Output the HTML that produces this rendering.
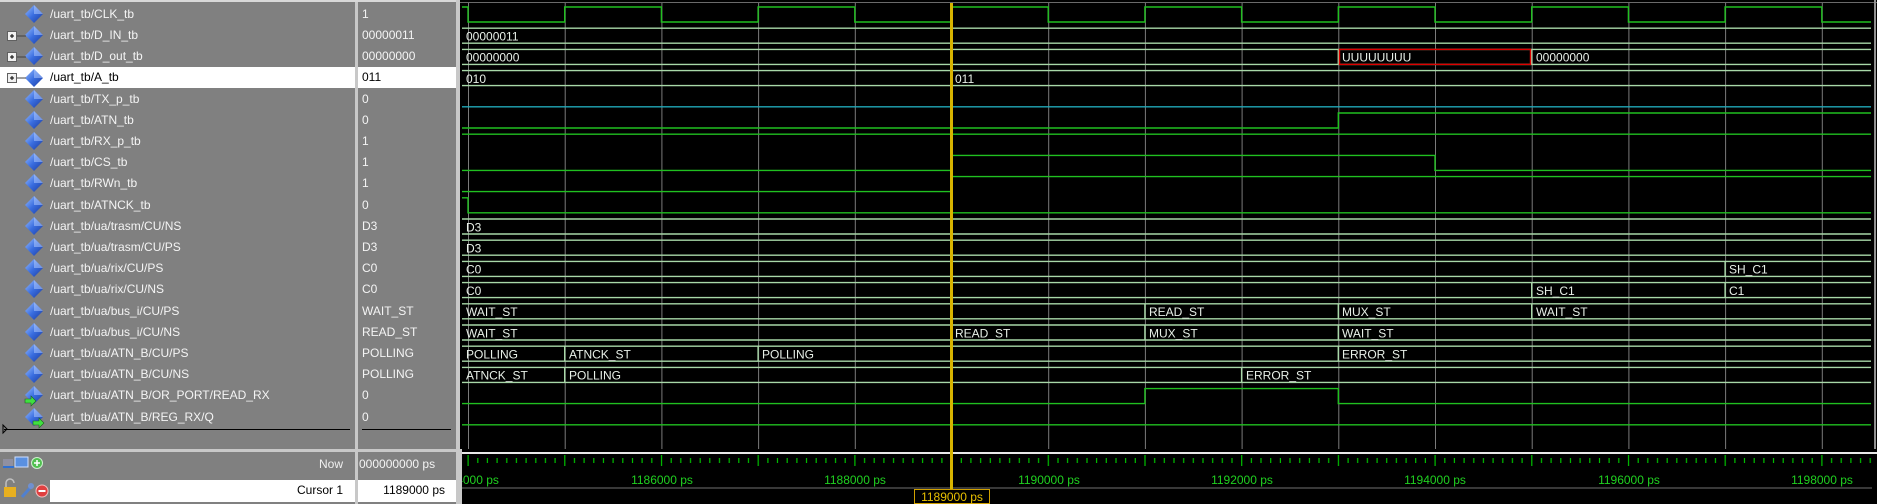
<!DOCTYPE html>
<html><head><meta charset="utf-8"><style>
html,body{margin:0;padding:0;background:#000;}
body{width:1877px;height:504px;position:relative;overflow:hidden;font-family:"Liberation Sans",sans-serif;font-size:12px;}
.p{position:absolute;background:#808080;}
.t{position:absolute;color:#f4f4f4;white-space:nowrap;line-height:21px;}
</style></head><body>
<div class="p" style="left:0;top:0;width:355px;height:449px;"></div>
<div style="position:absolute;left:355px;top:0;width:3px;height:504px;background:#c8c8c8"></div>
<div class="p" style="left:358px;top:0;width:98px;height:449px;"></div>
<div style="position:absolute;left:456px;top:0;width:4px;height:504px;background:#c8c8c8"></div>
<div style="position:absolute;left:0;top:0;width:456px;height:2px;background:#d8d8d8"></div>
<div style="position:absolute;left:0;top:449px;width:460px;height:3px;background:#c8c8c8"></div>
<div class="p" style="left:0;top:452px;width:355px;height:52px;"></div>
<div class="p" style="left:358px;top:452px;width:98px;height:52px;"></div>
<div style="position:absolute;left:0;top:67px;width:355px;height:21px;background:#fff"></div>
<div style="position:absolute;left:358px;top:67px;width:98px;height:21px;background:#fff"></div>
<div style="position:absolute;left:50px;top:480px;width:305px;height:22px;background:#fff"></div>
<div style="position:absolute;left:358px;top:480px;width:98px;height:22px;background:#fff"></div>
<div style="position:absolute;left:4px;top:429px;width:346px;height:1px;background:#000"></div>
<div style="position:absolute;left:362px;top:429px;width:89px;height:1px;background:#000"></div>

<div class="t" style="left:50px;top:4px">/uart_tb/CLK_tb</div>
<div class="t" style="left:50px;top:25px">/uart_tb/D_IN_tb</div>
<div class="t" style="left:50px;top:46px">/uart_tb/D_out_tb</div>
<div class="t" style="left:50px;top:67px;color:#000">/uart_tb/A_tb</div>
<div class="t" style="left:50px;top:89px">/uart_tb/TX_p_tb</div>
<div class="t" style="left:50px;top:110px">/uart_tb/ATN_tb</div>
<div class="t" style="left:50px;top:131px">/uart_tb/RX_p_tb</div>
<div class="t" style="left:50px;top:152px">/uart_tb/CS_tb</div>
<div class="t" style="left:50px;top:173px">/uart_tb/RWn_tb</div>
<div class="t" style="left:50px;top:195px">/uart_tb/ATNCK_tb</div>
<div class="t" style="left:50px;top:216px">/uart_tb/ua/trasm/CU/NS</div>
<div class="t" style="left:50px;top:237px">/uart_tb/ua/trasm/CU/PS</div>
<div class="t" style="left:50px;top:258px">/uart_tb/ua/rix/CU/PS</div>
<div class="t" style="left:50px;top:279px">/uart_tb/ua/rix/CU/NS</div>
<div class="t" style="left:50px;top:301px">/uart_tb/ua/bus_i/CU/PS</div>
<div class="t" style="left:50px;top:322px">/uart_tb/ua/bus_i/CU/NS</div>
<div class="t" style="left:50px;top:343px">/uart_tb/ua/ATN_B/CU/PS</div>
<div class="t" style="left:50px;top:364px">/uart_tb/ua/ATN_B/CU/NS</div>
<div class="t" style="left:50px;top:385px">/uart_tb/ua/ATN_B/OR_PORT/READ_RX</div>
<div class="t" style="left:50px;top:407px">/uart_tb/ua/ATN_B/REG_RX/Q</div>

<div class="t" style="left:362px;top:4px">1</div>
<div class="t" style="left:362px;top:25px">00000011</div>
<div class="t" style="left:362px;top:46px">00000000</div>
<div class="t" style="left:362px;top:67px;color:#000">011</div>
<div class="t" style="left:362px;top:89px">0</div>
<div class="t" style="left:362px;top:110px">0</div>
<div class="t" style="left:362px;top:131px">1</div>
<div class="t" style="left:362px;top:152px">1</div>
<div class="t" style="left:362px;top:173px">1</div>
<div class="t" style="left:362px;top:195px">0</div>
<div class="t" style="left:362px;top:216px">D3</div>
<div class="t" style="left:362px;top:237px">D3</div>
<div class="t" style="left:362px;top:258px">C0</div>
<div class="t" style="left:362px;top:279px">C0</div>
<div class="t" style="left:362px;top:301px">WAIT_ST</div>
<div class="t" style="left:362px;top:322px">READ_ST</div>
<div class="t" style="left:362px;top:343px">POLLING</div>
<div class="t" style="left:362px;top:364px">POLLING</div>
<div class="t" style="left:362px;top:385px">0</div>
<div class="t" style="left:362px;top:407px">0</div>

<div class="t" style="left:300px;top:454px;width:43px;text-align:right;color:#f0f0f0">Now</div>
<div class="t" style="left:359px;top:454px">000000000 ps</div>
<div class="t" style="left:250px;top:480px;width:93px;text-align:right;color:#000">Cursor 1</div>
<div class="t" style="left:358px;top:480px;width:87px;text-align:right;color:#000">1189000 ps</div>

<svg width="1877" height="504" style="position:absolute;left:0;top:0" xmlns="http://www.w3.org/2000/svg">
<defs>
<linearGradient id="dg" x1="0" y1="0" x2="1" y2="1"><stop offset="0" stop-color="#9cc0ff"/><stop offset="0.5" stop-color="#3a6ee0"/><stop offset="1" stop-color="#1a3aa0"/></linearGradient>
<pattern id="grid" x="468" y="0" width="96.7" height="504" patternUnits="userSpaceOnUse"><line x1="0.5" y1="0" x2="0.5" y2="504" stroke="#7a7a7a" stroke-width="1"/></pattern>
<pattern id="tick" x="467.5" y="0" width="96.7" height="504" patternUnits="userSpaceOnUse">
<g stroke="#00c000" stroke-width="1.2">
<line x1="0.6" y1="455" x2="0.6" y2="466"/>
<line x1="10.3" y1="458" x2="10.3" y2="463"/><line x1="19.9" y1="458" x2="19.9" y2="463"/><line x1="29.6" y1="458" x2="29.6" y2="463"/><line x1="39.3" y1="458" x2="39.3" y2="463"/><line x1="48.9" y1="458" x2="48.9" y2="463"/><line x1="58.6" y1="458" x2="58.6" y2="463"/><line x1="68.3" y1="458" x2="68.3" y2="463"/><line x1="77.9" y1="458" x2="77.9" y2="463"/><line x1="87.6" y1="458" x2="87.6" y2="463"/>
</g></pattern>
<clipPath id="rc"><rect x="462" y="449" width="1410" height="55"/></clipPath>
<symbol id="dia" viewBox="0 0 18 18"><polygon points="9,0 18,9 9,18 0,9" fill="url(#dg)"/><polygon points="9,0 18,9 9,9" fill="#b8d0ff" opacity="0.5"/></symbol>
</defs>

<g>
<use href="#dia" x="25" y="5" width="18" height="18"/>
<use href="#dia" x="25" y="26" width="18" height="18"/>
<use href="#dia" x="25" y="47" width="18" height="18"/>
<use href="#dia" x="25" y="69" width="18" height="18"/>
<use href="#dia" x="25" y="90" width="18" height="18"/>
<use href="#dia" x="25" y="111" width="18" height="18"/>
<use href="#dia" x="25" y="132" width="18" height="18"/>
<use href="#dia" x="25" y="153" width="18" height="18"/>
<use href="#dia" x="25" y="174" width="18" height="18"/>
<use href="#dia" x="25" y="196" width="18" height="18"/>
<use href="#dia" x="25" y="217" width="18" height="18"/>
<use href="#dia" x="25" y="238" width="18" height="18"/>
<use href="#dia" x="25" y="259" width="18" height="18"/>
<use href="#dia" x="25" y="280" width="18" height="18"/>
<use href="#dia" x="25" y="302" width="18" height="18"/>
<use href="#dia" x="25" y="323" width="18" height="18"/>
<use href="#dia" x="25" y="344" width="18" height="18"/>
<use href="#dia" x="25" y="365" width="18" height="18"/>
<use href="#dia" x="25" y="386" width="18" height="18"/>
<use href="#dia" x="25" y="408" width="18" height="18"/>
<path d="M25,399 h6 v-3 l5,5 l-5,5 v-3 h-6z" fill="#40e040" stroke="#206020" stroke-width="0.6"/>
<path d="M33,421 h6 v-3 l5,5 l-5,5 v-3 h-6z" fill="#40e040" stroke="#206020" stroke-width="0.6"/>
<path d="M17,36h9M17,57h9M17,78h9" stroke="#404040" stroke-width="1"/>
<g fill="#f0f0f0" stroke="#606060" stroke-width="1">
<rect x="7.5" y="31.5" width="9" height="9"/><rect x="7.5" y="52.5" width="9" height="9"/><rect x="7.5" y="73.5" width="9" height="9"/>
</g>
<path d="M10,36h4M12,34v4M10,57h4M12,55v4M10,78h4M12,76v4" stroke="#000" stroke-width="1"/>
<path d="M3,425 l4,4 l-4,4z" fill="none" stroke="#000"/>
<rect x="3" y="459" width="10" height="8" fill="#9090a0"/><path d="M3,467 h11" stroke="#3070d0" stroke-width="2"/>
<rect x="15" y="457" width="13" height="10" fill="#5a90e0" stroke="#d0e0ff"/>
<circle cx="37" cy="463" r="5.5" fill="#50c050" stroke="#d0f0d0"/><path d="M34,463h6M37,460v6" stroke="#fff" stroke-width="1.5"/>
<rect x="4" y="487" width="12" height="10" fill="#e8b020"/><path d="M6,487 v-4 a4,4 0 0 1 8,0" fill="none" stroke="#c0c0c0" stroke-width="1.5"/>
<path d="M22,497 l8,-9" stroke="#5080d0" stroke-width="3"/><circle cx="31" cy="486" r="3" fill="#7090d0"/>
<circle cx="42" cy="491" r="6" fill="#e04040" stroke="#f0c0c0"/><path d="M38.5,491h7" stroke="#fff" stroke-width="2"/>
</g>

<rect x="460" y="0" width="1417" height="504" fill="#000"/>
<line x1="460" y1="2.5" x2="1877" y2="2.5" stroke="#6a6a6a"/>
<rect x="462" y="3" width="1410" height="446" fill="url(#grid)"/>
<line x1="1875" y1="0" x2="1875" y2="504" stroke="#909090" stroke-width="2"/>

<g fill="none" stroke="#20c020" stroke-width="1.4">
<path d="M462,7H468V22H564.7V7H661.4V22H758.1V7H854.8V22H951.5V7H1048.2V22H1144.9V7H1241.6V22H1338.3V7H1435V22H1531.7V7H1628.4V22H1725.1V7H1821.8V22H1871"/>
<path d="M462,106.8H1871" stroke="#20a8b8"/>
<path d="M462,128H1338.3V113H1871"/>
<path d="M462,134.2H1871"/>
<path d="M462,170.4H951.5V155.4H1435V170.4H1871"/>
<path d="M462,191.6H951.5V176.6H1871"/>
<path d="M462,197.8H468V212.8H1871"/>
<path d="M462,403.6H1144.9V388.6H1338.3V403.6H1871"/>
<path d="M462,424.8H1871"/>
</g>

<g fill="none" stroke="#a8d8a8" stroke-width="1.4">
<path d="M462,28.2H1871M462,43.2H1871"/>
<path d="M462,49.4H1871M462,64.4H1871"/>
<path d="M462,70.6H1871M462,85.6H1871"/>
<path d="M462,219H1871M462,234H1871"/>
<path d="M462,240.2H1871M462,255.2H1871"/>
<path d="M462,261.4H1871M462,276.4H1871"/>
<path d="M462,282.6H1871M462,297.6H1871"/>
<path d="M462,303.8H1871M462,318.8H1871"/>
<path d="M462,325H1871M462,340H1871"/>
<path d="M462,346.2H1871M462,361.2H1871"/>
<path d="M462,367.4H1871M462,382.4H1871"/>
<path d="M1338.3,49.4v15M1531.7,49.4v15M951.5,70.6v15M1725.1,261.4v15M1531.7,282.6v15M1725.1,282.6v15M1144.9,303.8v15M1338.3,303.8v15M1531.7,303.8v15M951.5,325v15M1144.9,325v15M1338.3,325v15M564.7,346.2v15M758.1,346.2v15M1338.3,346.2v15M564.7,367.4v15M1241.6,367.4v15"/>
</g>
<rect x="1339.5" y="49.4" width="191" height="15" fill="none" stroke="#e00000" stroke-width="1.4"/>

<g fill="#e8f0e8" font-family="Liberation Sans, sans-serif" font-size="12">
<text x="466" y="40.5">00000011</text>
<text x="466" y="61.7">00000000</text>
<text x="1342" y="61.7">UUUUUUUU</text>
<text x="1536" y="61.7">00000000</text>
<text x="466" y="82.9">010</text>
<text x="955" y="82.9">011</text>
<text x="466" y="231.3">D3</text>
<text x="466" y="252.5">D3</text>
<text x="466" y="273.7">C0</text>
<text x="1729" y="273.7">SH_C1</text>
<text x="466" y="294.9">C0</text>
<text x="1536" y="294.9">SH_C1</text>
<text x="1729" y="294.9">C1</text>
<text x="466" y="316.1">WAIT_ST</text>
<text x="1149" y="316.1">READ_ST</text>
<text x="1342" y="316.1">MUX_ST</text>
<text x="1536" y="316.1">WAIT_ST</text>
<text x="466" y="337.3">WAIT_ST</text>
<text x="955" y="337.3">READ_ST</text>
<text x="1149" y="337.3">MUX_ST</text>
<text x="1342" y="337.3">WAIT_ST</text>
<text x="466" y="358.5">POLLING</text>
<text x="569" y="358.5">ATNCK_ST</text>
<text x="762" y="358.5">POLLING</text>
<text x="1342" y="358.5">ERROR_ST</text>
<text x="466" y="379.7">ATNCK_ST</text>
<text x="569" y="379.7">POLLING</text>
<text x="1246" y="379.7">ERROR_ST</text>
</g>

<rect x="460" y="449" width="1417" height="55" fill="#000"/>
<line x1="460" y1="453" x2="1877" y2="453" stroke="#e8e8e8" stroke-width="2"/>
<rect x="462" y="454" width="1410" height="14" fill="url(#tick)"/>
<line x1="462" y1="488" x2="1872" y2="488" stroke="#707070"/>
<g clip-path="url(#rc)" fill="#20d020" font-family="Liberation Sans, sans-serif" font-size="12" text-anchor="middle">
<text x="468" y="484">1184000 ps</text>
<text x="662" y="484">1186000 ps</text>
<text x="855" y="484">1188000 ps</text>
<text x="1049" y="484">1190000 ps</text>
<text x="1242" y="484">1192000 ps</text>
<text x="1435" y="484">1194000 ps</text>
<text x="1629" y="484">1196000 ps</text>
<text x="1822" y="484">1198000 ps</text>
</g>
<rect x="456" y="449" width="6" height="55" fill="#c8c8c8"/>
<line x1="951.5" y1="3" x2="951.5" y2="489" stroke="#d8b400" stroke-width="3"/>
<rect x="914.5" y="489.5" width="75" height="14" fill="#000" stroke="#d0a000"/>
<text x="952" y="501" fill="#e8c000" font-family="Liberation Sans, sans-serif" font-size="12" text-anchor="middle">1189000 ps</text>
</svg>
</body></html>
